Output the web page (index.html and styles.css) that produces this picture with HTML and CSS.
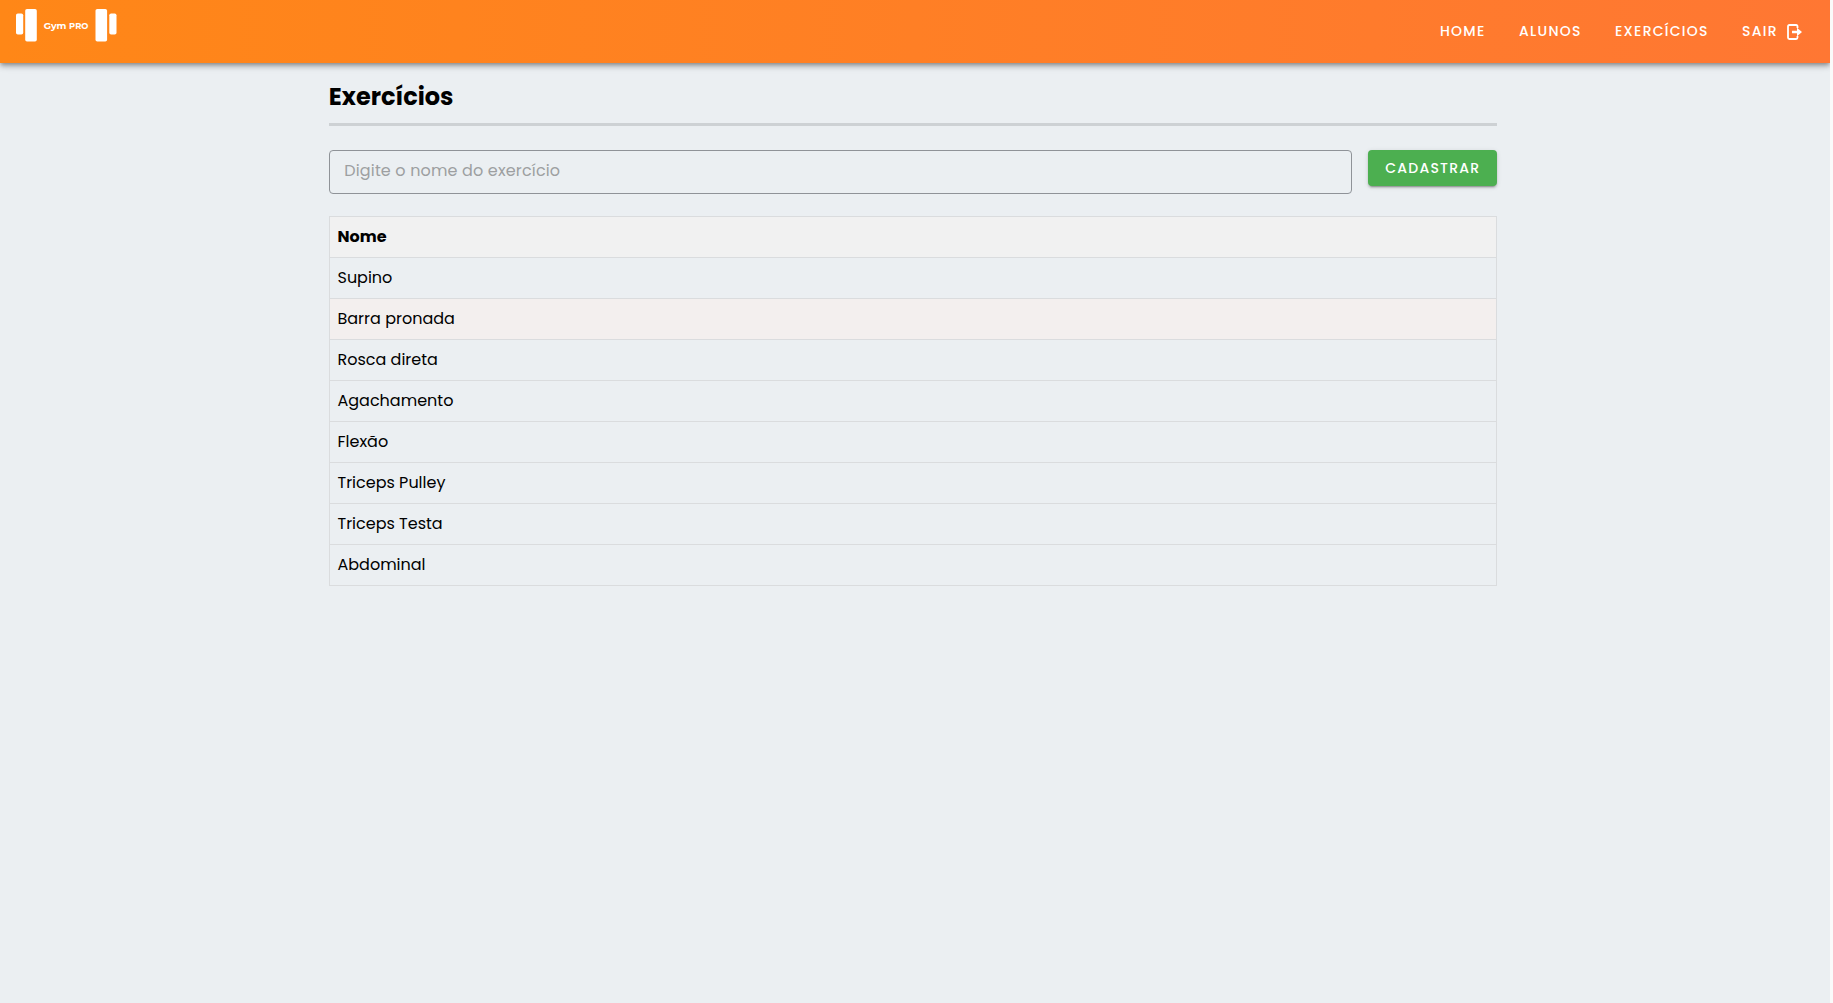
FILE: index.html
```html
<!DOCTYPE html>
<html lang="pt-BR">
<head>
<meta charset="utf-8">
<title>Gym PRO</title>
<link rel="stylesheet" href="styles.css">
</head>
<body>
<div class="app">
  <header class="topbar">
    <a class="logo">
      <svg class="plates" width="22" height="33" viewBox="0 0 22 33"><rect x="0" y="4.5" width="7.2" height="21" rx="1.8"/><rect x="9.2" y="0" width="11.6" height="32.5" rx="1.8"/></svg>
      <span class="brand">Gym <span class="brand-pro">PRO</span></span>
      <svg class="plates" width="22" height="33" viewBox="0 0 22 33"><rect x="0.5" y="0" width="11.6" height="32.5" rx="1.8"/><rect x="14.3" y="4.5" width="7.2" height="21" rx="1.8"/></svg>
    </a>
    <nav class="menu">
      <a class="home">HOME</a>
      <a class="students">ALUNOS</a>
      <a class="exercises">EXERCÍCIOS</a>
      <a class="exit">SAIR</a>
      <svg class="exit-icon" width="16" height="16" viewBox="0 0 16 16"><path d="M10.5 4V2.4Q10.5 1 9.1 1H2.4Q1 1 1 2.4V13.6Q1 15 2.4 15H9.1Q10.5 15 10.5 13.6V12" fill="none" stroke="#fff" stroke-width="1.8"/><path d="M5 6.7H10V3.7L15 8L10 12.3V9.3H5Z" fill="#fff"/></svg>
    </nav>
  </header>
  <main class="content">
    <h1>Exercícios</h1>
    <form class="search">
      <div class="field">Digite o nome do exercício</div>
      <button type="button">CADASTRAR</button>
    </form>
    <table>
      <thead><tr><th>Nome</th></tr></thead>
      <tbody>
        <tr><td>Supino</td></tr>
        <tr class="hover"><td>Barra pronada</td></tr>
        <tr><td>Rosca direta</td></tr>
        <tr><td>Agachamento</td></tr>
        <tr><td>Flexão</td></tr>
        <tr><td>Triceps Pulley</td></tr>
        <tr><td>Triceps Testa</td></tr>
        <tr><td>Abdominal</td></tr>
      </tbody>
    </table>
  </main>
</div>
</body>
</html>
```
FILE: styles.css
```css
* { box-sizing: border-box; }
body { margin: 0; background: #fafafa; color: #000; font: 16px/24px Poppins, Inter, sans-serif; }
.app { width: 1830px; height: 1003px; background: #ebeff2; overflow: hidden; }
.topbar { height: 63px; display: flex; justify-content: space-between; background: linear-gradient(to right, #ff8717, #ff7733); box-shadow: 0 2px 4px -1px rgba(0,0,0,.3), 0 4px 5px rgba(0,0,0,.16), 0 1px 10px rgba(0,0,0,.12); padding: 0 27px 0 15.6px; }
.logo { display: flex; width: 101px; height: 33px; margin-top: 9px; justify-content: space-between; color: #fff; }
.plates { fill: #fff; display: block; }
.brand { font: 700 9.4px/33px Montserrat, Poppins, sans-serif; white-space: nowrap; }
.brand-pro { font-size: 8.4px; }
.menu { display: flex; padding-top: 19px; font-size: 14px; font-weight: 500; color: #fff; letter-spacing: 1.25px; }
.home { width: 79px; }
.students { width: 96px; }
.exercises { width: 127px; }
.exit { width: 45px; }
.exit-icon { margin-top: 5px; }
.content { width: 1168px; margin-left: 328.8px; }
h1 { height: 63px; margin: 0 0 24px; padding-top: 16px; border-bottom: 3px solid #cdd1d4; font-size: 24px; line-height: 36px; font-weight: 700; }
.search { display: flex; gap: 16px; align-items: flex-start; margin: 0 0 22px; }
.field { flex: 1; height: 44px; border: 1px solid #8f9398; border-radius: 4px; padding: 8px 14.5px; color: #9d9fa1; letter-spacing: .15px; }
button { width: 129px; height: 36px; padding: 1px 0 0 1px; border: 0; border-radius: 4px; background: #4caf50; color: #fff; font: 500 14px/35px Poppins, Inter, sans-serif; letter-spacing: 1.25px; box-shadow: 0 3px 1px -2px rgba(0,0,0,.2), 0 2px 2px rgba(0,0,0,.14), 0 1px 5px rgba(0,0,0,.12); }
table { width: 100%; border-collapse: collapse; }
th, td { height: 41px; border: 1px solid #dadcde; padding: 0 7.7px; text-align: left; }
th { background: #f1f1f1; font-weight: 700; }
.hover { background: #f3efee; }
```
